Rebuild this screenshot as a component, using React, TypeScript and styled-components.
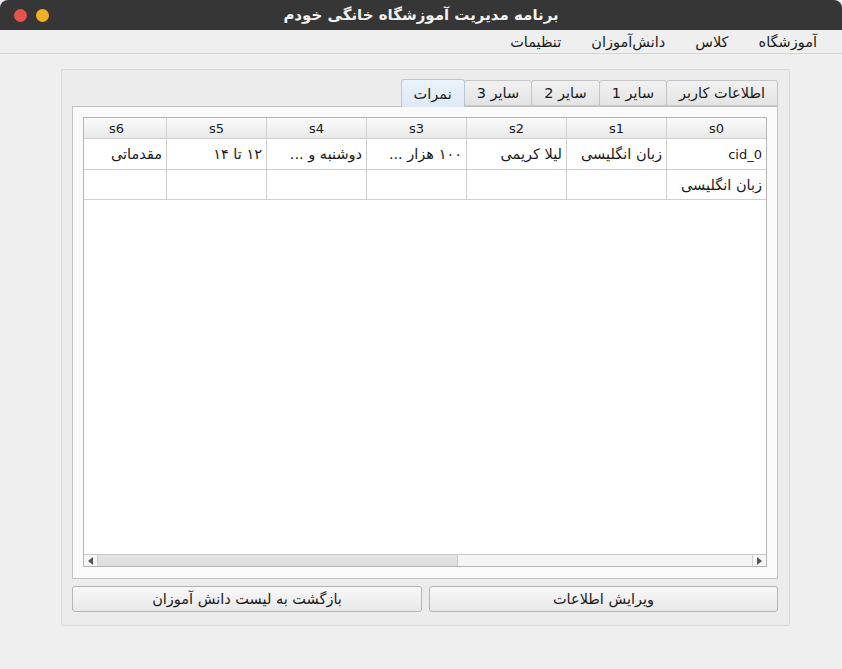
import React from "react";
import styled, { createGlobalStyle } from "styled-components";

const Global = createGlobalStyle`
  html, body { margin: 0; padding: 0; background: #efefef; }
  * { box-sizing: border-box; }
`;

const FONT = `"DejaVu Sans", "Noto Sans", sans-serif`;
const FA = "14.5px";

const Window = styled.div`
  width: 842px;
  height: 669px;
  background: #efefef;
  font-family: ${FONT};
  font-size: 13px;
  color: #1a1a1a;
  display: flex;
  flex-direction: column;
  overflow: hidden;
`;

const TitleBar = styled.div`
  height: 30px;
  background: #363636;
  border-radius: 8px 8px 0 0;
  display: grid;
  grid-template-columns: 100px 1fr 100px;
  align-items: center;
  flex-shrink: 0;
`;

const Lights = styled.div`
  display: flex;
  gap: 9px;
  padding-left: 14px;
`;

const Light = styled.span<{ $c: string }>`
  width: 13px;
  height: 13px;
  border-radius: 50%;
  background: ${(p) => p.$c};
`;

const Title = styled.div`
  text-align: center;
  color: #f2f2f2;
  font-weight: bold;
  font-size: 15px;
  direction: rtl;
`;

const MenuBar = styled.div`
  height: 24px;
  border-bottom: 1px solid #d5d5d5;
  display: flex;
  direction: rtl;
  align-items: center;
  padding-right: 10px;
  flex-shrink: 0;
`;

const MenuItem = styled.div`
  padding: 0 15px;
  font-size: ${FA};
`;

const Content = styled.div`
  padding: 15px 52px 0 61px;
`;

const Group = styled.div`
  width: 729px;
  height: 557px;
  border: 1px solid #d9d9d9;
  border-radius: 2px;
  background: #ececec;
  padding: 10px 11px 12px 10px;
  display: flex;
  flex-direction: column;
`;

const TabBar = styled.div`
  height: 26px;
  display: flex;
  direction: rtl;
  align-items: flex-end;
`;

const Tab = styled.div<{ $active?: boolean }>`
  height: ${(p) => (p.$active ? 28 : 26)}px;
  margin-bottom: ${(p) => (p.$active ? -1 : 0)}px;
  padding: 0 12px;
  border: 1px solid ${(p) => (p.$active ? "#b6c8da" : "#c4c4c4")};
  border-bottom: ${(p) => (p.$active ? "none" : "1px solid #c4c4c4")};
  border-radius: 3px 3px 0 0;
  margin-left: ${(p) => (p.$active ? 2 : -1)}px;
  background: ${(p) =>
    p.$active ? "linear-gradient(#eaf3fb, #dde9f4)" : "linear-gradient(#f1f1f1, #e4e4e4)"};
  display: flex;
  align-items: center;
  font-size: ${FA};
  position: relative;
  z-index: ${(p) => (p.$active ? 2 : 1)};
  white-space: nowrap;
`;

const Pane = styled.div`
  height: 473px;
  border: 1px solid #c2c2c2;
  background: #fafafa;
  padding: 10px 10px 11px 10px;
`;

const TableView = styled.div`
  height: 100%;
  border: 1px solid #b5b5b5;
  background: #ffffff;
  display: flex;
  flex-direction: column;
  overflow: hidden;
`;

const Grid = styled.div`
  flex: 1;
  direction: rtl;
  overflow: hidden;
`;

const Row = styled.div<{ $h: number }>`
  display: flex;
  height: ${(p) => p.$h}px;
  border-bottom: 1px solid #cfcfcf;
  width: max-content;
`;

const HeadCell = styled.div`
  width: 100px;
  flex-shrink: 0;
  border-left: 1px solid #cfcfcf;
  background: linear-gradient(#fbfbfb, #e9e9e9);
  display: flex;
  align-items: center;
  justify-content: center;
  font-size: 13px;
  direction: ltr;
`;

const Cell = styled.div<{ $latin?: boolean }>`
  width: 100px;
  flex-shrink: 0;
  border-left: 1px solid #cfcfcf;
  display: flex;
  align-items: center;
  padding: 0 4px;
  font-size: ${(p) => (p.$latin ? "13px" : FA)};
  white-space: nowrap;
  overflow: hidden;
`;

const HScroll = styled.div`
  height: 12px;
  border-top: 1px solid #c9c9c9;
  display: flex;
  background: #f4f4f4;
  flex-shrink: 0;
`;

const ArrowBtn = styled.div<{ $side: "l" | "r" }>`
  width: 14px;
  display: flex;
  align-items: center;
  justify-content: center;
  background: #f6f6f6;
  ${(p) => (p.$side === "l" ? "border-right: 1px solid #cfcfcf;" : "border-left: 1px solid #cfcfcf;")}
`;

const Handle = styled.div`
  width: 360px;
  background: linear-gradient(#e6e6e6, #dcdcdc);
  border-right: 1px solid #cccccc;
`;

const Track = styled.div`
  flex: 1;
`;

const Buttons = styled.div`
  margin-top: 7px;
  display: grid;
  grid-template-columns: 350px 349px;
  gap: 7px;
`;

const Button = styled.button`
  height: 26px;
  border: 1px solid #b4b4b4;
  border-radius: 3px;
  background: linear-gradient(#f8f8f8, #e9e9e9);
  font-family: ${FONT};
  font-size: ${FA};
  color: #1a1a1a;
  direction: rtl;
  padding: 0;
`;

const cols = ["s0", "s1", "s2", "s3", "s4", "s5", "s6", "s7"];
const row1 = ["cid_0", "زبان انگلیسی", "لیلا کریمی", "۱۰۰ هزار ...", "دوشنبه و ...", "۱۲ تا ۱۴", "مقدماتی", ""];
const row2 = ["زبان انگلیسی", "", "", "", "", "", "", ""];

const Tri = ({ dir }: { dir: "l" | "r" }) => (
  <svg width="5" height="8" viewBox="0 0 5 8">
    {dir === "l" ? <path d="M5 0 L0 4 L5 8 Z" fill="#555" /> : <path d="M0 0 L5 4 L0 8 Z" fill="#555" />}
  </svg>
);

export default function App() {
  return (
    <>
      <Global />
      <Window>
        <TitleBar>
          <Lights>
            <Light $c="#e9524a" />
            <Light $c="#f2b01e" />
          </Lights>
          <Title>برنامه مدیریت آموزشگاه خانگی خودم</Title>
          <div />
        </TitleBar>
        <MenuBar>
          <MenuItem>آموزشگاه</MenuItem>
          <MenuItem>کلاس</MenuItem>
          <MenuItem>دانش‌آموزان</MenuItem>
          <MenuItem>تنظیمات</MenuItem>
        </MenuBar>
        <Content>
          <Group>
            <TabBar>
              <Tab>اطلاعات کاربر</Tab>
              <Tab>سایر 1</Tab>
              <Tab>سایر 2</Tab>
              <Tab>سایر 3</Tab>
              <Tab $active>نمرات</Tab>
            </TabBar>
            <Pane>
              <TableView>
                <Grid>
                  <Row $h={21}>
                    {cols.map((c) => (
                      <HeadCell key={c}>{c}</HeadCell>
                    ))}
                  </Row>
                  <Row $h={31}>
                    {row1.map((t, i) => (
                      <Cell key={i} $latin={i === 0}>{t}</Cell>
                    ))}
                  </Row>
                  <Row $h={30}>
                    {row2.map((t, i) => (
                      <Cell key={i}>{t}</Cell>
                    ))}
                  </Row>
                </Grid>
                <HScroll>
                  <ArrowBtn $side="l">
                    <Tri dir="l" />
                  </ArrowBtn>
                  <Handle />
                  <Track />
                  <ArrowBtn $side="r">
                    <Tri dir="r" />
                  </ArrowBtn>
                </HScroll>
              </TableView>
            </Pane>
            <Buttons>
              <Button>بازگشت به لیست دانش آموزان</Button>
              <Button>ویرایش اطلاعات</Button>
            </Buttons>
          </Group>
        </Content>
      </Window>
    </>
  );
}
